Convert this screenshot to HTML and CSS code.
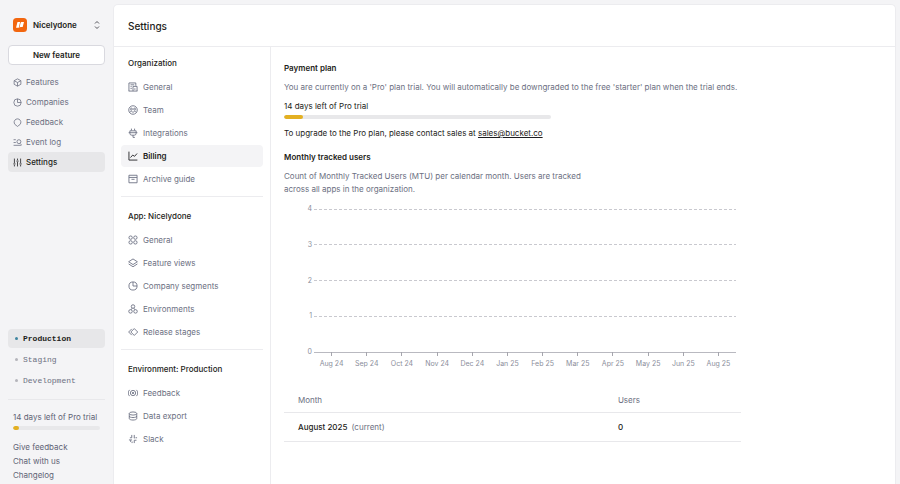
FILE: index.html
```html
<!DOCTYPE html>
<html lang="en">
<head>
  <meta charset="UTF-8" />
  <meta name="viewport" content="width=device-width, initial-scale=1.0" />
  <title>Settings - Billing</title>
  <link rel="stylesheet" href="styles.css">
</head>
<body>
  <aside class="sidebar">
    <button class="workspace" type="button">
      <svg class="logo" viewBox="0 0 14 14">
        <rect width="14" height="14" rx="3.5" fill="#f2660f" />
        <path d="M4.500 4h2.600L5.800 9.800H3zM8.300 4H11L9.700 9H7.500l-1 .8L7.600 4.800z" fill="#fff" />
      </svg>
      <span class="workspace-name">Nicelydone</span>
      <svg class="chevrons" viewBox="0 0 6 10"><path d="M1 3.5 3 1.5l2 2M1 6.5l2 2 2-2" /></svg>
    </button>

    <button class="new-feature" type="button">New feature</button>

    <nav class="main-nav">
      <a href="#"><svg class="icon" viewBox="0 0 16 16"><path d="M8 1.5 14 4.8v6.4L8 14.5l-6-3.3V4.8zM2 4.8 8 8l6-3.2M8 8v6.5" /></svg>Features</a>
      <a href="#"><svg class="icon" viewBox="0 0 16 16"><circle cx="8" cy="8" r="6.5" /><path d="M8 1.5V8h6.5" /></svg>Companies</a>
      <a href="#"><svg class="icon" viewBox="0 0 16 16"><path d="M5.5 13A6 6 0 1 1 10.5 13L8 15z" /></svg>Feedback</a>
      <a href="#"><svg class="icon" viewBox="0 0 16 16"><path d="M1 3h4M1 8h4M1 13h14M12.5 9.5 15 12" /><circle cx="10.5" cy="6.5" r="3.5" /></svg>Event log</a>
      <a href="#" class="active"><svg class="icon" viewBox="0 0 16 16"><path d="M2.5 1v8M2.5 12v3M8 1v3M8 7v8M13.5 1v8M13.5 12v3M.5 10.5h4M6 5.5h4M11.5 10.5h4" /></svg>Settings</a>
    </nav>

    <nav class="env-nav">
      <a href="#" class="active">Production</a>
      <a href="#">Staging</a>
      <a href="#">Development</a>
    </nav>

    <div class="sidebar-footer">
      <div class="trial-label">14 days left of Pro trial</div>
      <div class="bar"><div class="bar-fill" style="width: 7%"></div></div>
      <a href="#">Give feedback</a>
      <a href="#">Chat with us</a>
      <a href="#">Changelog</a>
    </div>
  </aside>

  <main class="panel">
    <header class="panel-header">
      <h1>Settings</h1>
    </header>

    <div class="panel-body">
      <nav class="settings-nav">
        <section>
          <h2>Organization</h2>
          <a href="#"><svg class="icon" viewBox="0 0 16 16"><path d="M1 14.5h14M1.5 14.5v-13h11V6M8 14.5V7h6.500v7.500M4 4.500h6M4 7.500h2M4 10.500h2M11 10v2.500" /></svg>General</a>
          <a href="#"><svg class="icon" viewBox="0 0 16 16"><circle cx="8" cy="8" r="6.8" /><circle cx="5.5" cy="6.5" r="1.5" /><circle cx="10.5" cy="6.5" r="1.5" /><path d="M2.5 11.5c2-2.500 4-2 5.500.5 1.500-2.500 3.500-3 5.500-.5" /></svg>Team</a>
          <a href="#"><svg class="icon" viewBox="0 0 16 16"><path d="M5.5 1v3M10.5 1v3M3 4.500h10v4a3 3 0 0 1-3 3H6a3 3 0 0 1-3-3zM1 7.500h14M8 11.500V15h3" /></svg>Integrations</a>
          <a href="#" class="active"><svg class="icon" viewBox="0 0 16 16"><path d="M1.5 1v13.500H15M4 10.500l3.500-4 3 2L14.500 4" /></svg>Billing</a>
          <a href="#"><svg class="icon" viewBox="0 0 16 16"><path d="M1.5 2h13v12h-13zM1.500 5.500h13M5.500 8.500h5" /></svg>Archive guide</a>
        </section>
        <section>
          <h2>App: Nicelydone</h2>
          <a href="#"><svg class="icon" viewBox="0 0 16 16"><circle cx="4.2" cy="4.2" r="2.7" /><circle cx="11.8" cy="4.2" r="2.7" /><circle cx="4.2" cy="11.8" r="2.7" /><circle cx="11.8" cy="11.8" r="2.7" /></svg>General</a>
          <a href="#"><svg class="icon" viewBox="0 0 16 16"><path d="M8 1.500 15 6l-7 4.500L1 6zM1 9.500 8 14l7-4.500" /></svg>Feature views</a>
          <a href="#"><svg class="icon" viewBox="0 0 16 16"><circle cx="8" cy="8" r="6.5" /><path d="M8 1.5V8h6.5" /></svg>Company segments</a>
          <a href="#"><svg class="icon" viewBox="0 0 16 16"><circle cx="8" cy="4" r="2.8" /><circle cx="4" cy="11.8" r="2.8" /><circle cx="12" cy="11.8" r="2.8" /><path d="M6.800 6.500 5 9.200M9.200 6.500 11 9.200" /></svg>Environments</a>
          <a href="#"><svg class="icon" viewBox="0 0 16 16"><path d="M10 2.500 15.500 8 10 13.500 4.500 8zM6 3 1 8l5 5" /></svg>Release stages</a>
        </section>
        <section>
          <h2>Environment: Production</h2>
          <a href="#"><svg class="icon" viewBox="0 0 16 16"><circle cx="8" cy="8" r="4.2" /><path d="M6.500 8 8 6.500 9.500 8 8 9.500zM2.500 3a7 7 0 0 0 0 10M13.500 3a7 7 0 0 1 0 10" /></svg>Feedback</a>
          <a href="#"><svg class="icon" viewBox="0 0 16 16"><ellipse cx="8" cy="4" rx="6" ry="2.5" /><path d="M2 4v8c0 3.300 12 3.300 12 0V4M2 8c0 3.300 12 3.300 12 0" /></svg>Data export</a>
          <a href="#"><svg class="icon" viewBox="0 0 16 16"><path d="M6 1.500V6H3M10 1.500v5M14.500 6H12M1.500 9.500h5M4 12.500V10M6.500 12v2.500M10 14.500V10h3.500M9.500 6.500h1" /></svg>Slack</a>
        </section>
      </nav>

      <div class="content">
        <h3>Payment plan</h3>
        <p class="muted">You are currently on a 'Pro' plan trial. You will automatically be downgraded to the free 'starter' plan when the trial ends.</p>
        <div class="trial">
          <div class="trial-label">14 days left of Pro trial</div>
          <div class="bar"><div class="bar-fill" style="width: 7%"></div></div>
        </div>
        <p class="upgrade">To upgrade to the Pro plan, please contact sales at <a href="mailto:sales@bucket.co">sales@bucket.co</a></p>

        <h3>Monthly tracked users</h3>
        <p class="muted narrow">Count of Monthly Tracked Users (MTU) per calendar month. Users are tracked across all apps in the organization.</p>

        <div class="chart">
          <div class="chart-rows">
            <div class="chart-row"><span>4</span></div>
            <div class="chart-row"><span>3</span></div>
            <div class="chart-row"><span>2</span></div>
            <div class="chart-row"><span>1</span></div>
            <div class="chart-row axis"><span>0</span></div>
          </div>
          <div class="chart-months">
            <span>Aug 24</span>
            <span>Sep 24</span>
            <span>Oct 24</span>
            <span>Nov 24</span>
            <span>Dec 24</span>
            <span>Jan 25</span>
            <span>Feb 25</span>
            <span>Mar 25</span>
            <span>Apr 25</span>
            <span>May 25</span>
            <span>Jun 25</span>
            <span>Aug 25</span>
          </div>
        </div>

        <table class="usage">
          <thead>
            <tr><th>Month</th><th>Users</th></tr>
          </thead>
          <tbody>
            <tr><td>August 2025 <span class="current">(current)</span></td><td>0</td></tr>
          </tbody>
        </table>
      </div>
    </div>
  </main>
</body>
</html>
```
FILE: styles.css
```css
* {
  box-sizing: border-box;
}
body {
  margin: 0;
  display: flex;
  min-height: 100vh;
  background: #f4f4f6;
  color: #1d1d20;
  font-family: Inter, "Liberation Sans", sans-serif;
  font-size: 8px;
  line-height: 12px;
}
a {
  color: inherit;
  text-decoration: none;
}
h1, h2, h3, p {
  margin: 0;
}
button {
  font: inherit;
  color: inherit;
  cursor: pointer;
}
.icon {
  flex: none;
  width: 10px;
  height: 10px;
  fill: none;
  stroke: currentColor;
  stroke-width: 1.4;
}

/* sidebar */
.sidebar {
  flex: none;
  width: 113px;
  padding: 15px 8px 0;
  display: flex;
  flex-direction: column;
}
.workspace {
  display: flex;
  align-items: center;
  gap: 6px;
  height: 20px;
  padding: 0 5px;
  border: none;
  background: none;
  font-weight: 600;
}
.logo {
  width: 14px;
  height: 14px;
}
.workspace-name {
  flex: 1;
  text-align: left;
}
.chevrons {
  width: 6px;
  height: 10px;
  fill: none;
  stroke: #55555c;
}
.new-feature {
  height: 20px;
  margin-top: 10px;
  padding: 0;
  background: #fff;
  border: 1px solid #d9d9df;
  border-radius: 4px;
  font-weight: 600;
}
.main-nav,
.env-nav {
  display: flex;
  flex-direction: column;
  color: #6c7082;
}
.main-nav {
  margin-top: 7px;
}
.main-nav a {
  display: flex;
  align-items: center;
  gap: 4px;
  height: 20px;
  padding: 0 5px;
  border-radius: 4px;
}
.main-nav .icon {
  width: 9px;
  height: 9px;
}
.sidebar .active {
  background: #e7e7e9;
  color: #1d1d20;
  font-weight: 500;
}
.env-nav {
  gap: 2px;
  margin-top: auto;
  padding-bottom: 9px;
  border-bottom: 1px solid #e8e8eb;
  font-family: "Liberation Mono", monospace;
}
.env-nav a {
  display: flex;
  align-items: center;
  gap: 5px;
  height: 19px;
  padding: 0 7px;
  border-radius: 4px;
}
.env-nav a::before {
  content: "";
  width: 3px;
  height: 3px;
  border-radius: 50%;
  background: #b5b5bb;
}
.env-nav .active::before {
  background: #3f86a0;
}
.env-nav .active {
  font-weight: 700;
}
.sidebar-footer {
  display: flex;
  flex-direction: column;
  padding: 11px 5px 2px;
  color: #5f6375;
}
.sidebar-footer a {
  line-height: 14px;
}
.sidebar-footer .bar {
  margin: 3px 0 10px;
}
.bar {
  height: 4px;
  border-radius: 2px;
  background: #e8e8ea;
  overflow: hidden;
}
.bar-fill {
  height: 100%;
  border-radius: 2px;
  background: #e3b022;
}

/* main panel */
.panel {
  flex: 1;
  display: flex;
  flex-direction: column;
  margin: 4px 4px 0 0;
  background: #fff;
  border: 1px solid #ececef;
  border-bottom: none;
  border-radius: 5px 5px 0 0;
}
.panel-header {
  padding: 13px 14px 12px;
  border-bottom: 1px solid #ececef;
}
h1 {
  font-size: 10px;
  line-height: 16px;
  font-weight: 500;
}
.panel-body {
  flex: 1;
  display: flex;
}
.settings-nav {
  flex: none;
  width: 157px;
  padding: 0 7px;
  border-right: 1px solid #ececef;
  color: #6c7082;
}
.settings-nav section {
  display: flex;
  flex-direction: column;
  gap: 1px;
  padding: 13px 0 6px;
  border-bottom: 1px solid #ececef;
}
.settings-nav section:first-child {
  padding-top: 10px;
}
.settings-nav section:last-child {
  border-bottom: none;
}
h2 {
  padding: 0 7px;
  margin-bottom: 6px;
  color: #1d1d20;
  font-size: 8px;
  line-height: 12px;
  font-weight: 500;
}
.settings-nav a {
  display: flex;
  align-items: center;
  gap: 5px;
  height: 22px;
  padding: 0 7px;
  border-radius: 4px;
}
.settings-nav .active {
  background: #f4f4f6;
  color: #1d1d20;
  font-weight: 600;
}

/* billing content */
.content {
  flex: 1;
  padding: 14px 13px;
}
h3 {
  font-size: 8px;
  line-height: 14px;
  font-weight: 600;
}
.muted {
  margin: 6px 0 7px;
  color: #6c7082;
}
.narrow {
  max-width: 308px;
  line-height: 13px;
}
.trial {
  max-width: 267px;
}
.trial .bar {
  margin-top: 3px;
}
.upgrade {
  margin: 8px 0 11px;
}
.upgrade a {
  text-decoration: underline;
}
.chart {
  max-width: 452px;
  color: #8b8e9b;
  font-size: 7px;
}
.chart-rows {
  display: flex;
  flex-direction: column;
  justify-content: space-between;
  height: 155px;
}
.chart-row {
  display: flex;
  align-items: center;
  gap: 2px;
}
.chart-row span {
  width: 28px;
  text-align: right;
}
.chart-row::after {
  content: "";
  flex: 1;
  height: 1px;
  background: repeating-linear-gradient(to right, #c9c9cf 0 3px, transparent 3px 5px);
}
.chart-row.axis::after {
  background: #b9b9c0;
}
.chart-months {
  display: flex;
  margin: -6px 0 0 30px;
}
.chart-months span {
  flex: 1;
  text-align: center;
  white-space: nowrap;
}
.chart-months span::before {
  content: "";
  display: block;
  width: 1px;
  height: 4px;
  margin: 0 auto 2px;
  background: #a5a5ad;
}
.usage {
  width: 100%;
  max-width: 457px;
  margin-top: 18px;
  border-collapse: collapse;
  table-layout: fixed;
}
.usage th,
.usage td {
  padding: 8px 14px;
  border-bottom: 1px solid #e8e8eb;
  text-align: left;
  font-weight: 500;
}
.usage th {
  padding: 6px 14px;
  color: #6c7082;
  font-weight: 400;
}
.usage th:first-child {
  width: 70%;
}
.current {
  margin-left: 2px;
  color: #6c7082;
  font-weight: 400;
}
```
